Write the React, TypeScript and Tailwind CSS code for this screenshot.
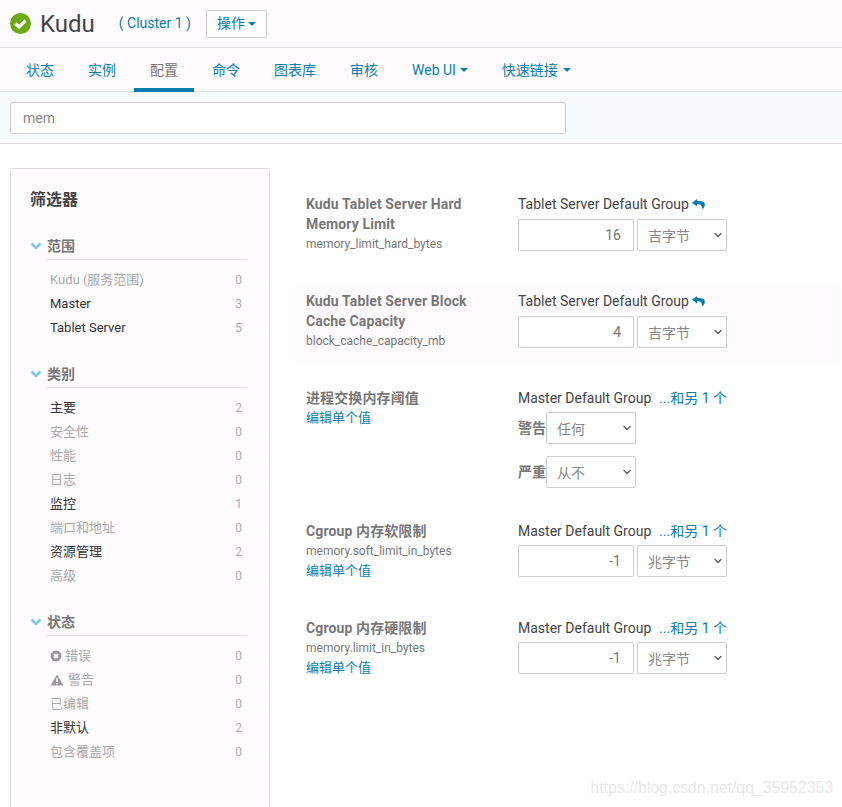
import { ChevronDown } from "lucide-react";

const navItems = ["状态", "实例", "配置", "命令", "图表库", "审核"];

type FilterItem = { label: string; count: number; active?: boolean; icon?: "error" | "warn" };

const groups: { title: string; items: FilterItem[] }[] = [
  {
    title: "范围",
    items: [
      { label: "Kudu (服务范围)", count: 0 },
      { label: "Master", count: 3, active: true },
      { label: "Tablet Server", count: 5, active: true },
    ],
  },
  {
    title: "类别",
    items: [
      { label: "主要", count: 2, active: true },
      { label: "安全性", count: 0 },
      { label: "性能", count: 0 },
      { label: "日志", count: 0 },
      { label: "监控", count: 1, active: true },
      { label: "端口和地址", count: 0 },
      { label: "资源管理", count: 2, active: true },
      { label: "高级", count: 0 },
    ],
  },
  {
    title: "状态",
    items: [
      { label: "错误", count: 0, icon: "error" },
      { label: "警告", count: 0, icon: "warn" },
      { label: "已编辑", count: 0 },
      { label: "非默认", count: 2, active: true },
      { label: "包含覆盖项", count: 0 },
    ],
  },
];

function Caret() {
  return <span className="inline-block w-0 h-0 border-x-[4px] border-x-transparent border-t-[4px] border-t-[#0a7cac]" />;
}

function Select({ value }: { value: string }) {
  return (
    <div className="w-[90px] h-[32px] bg-white border border-[#ccc] rounded-[2px] flex items-center justify-between pl-[10px] pr-[2px] text-[14px] font-normal text-[#888]">
      <span className="pt-[2px]">{value}</span>
      <ChevronDown size={12} strokeWidth={3} className="text-[#666]" />
    </div>
  );
}

function NumberField({ value, unit, tight }: { value: string; unit: string; tight?: boolean }) {
  return (
    <div className={tight ? "flex gap-[3px] mt-[4px]" : "flex gap-[3px] mt-[5px]"}>
      <div className="w-[116px] h-[32px] bg-white border border-[#ccc] rounded-[2px] flex items-center justify-end pr-[12px] text-[14px] text-[#777]">
        {value}
      </div>
      <Select value={unit} />
    </div>
  );
}

function UndoIcon() {
  return (
    <svg width="13" height="11" viewBox="0 0 13 11" className="ml-[3px]">
      <path d="M5 0 L0 3.8 L5 7.6 V5.4 C8 5.2 10 6 10.5 10.5 C12.5 8.5 13 6.5 12.8 5 C12.4 2.5 9 1.8 5 2 Z" fill="#0a7cac" />
    </svg>
  );
}

function GroupLabel({ name, undo, more }: { name: string; undo?: boolean; more?: boolean }) {
  return (
    <div className="flex items-center h-[20px] w-[209px] text-[14px] text-[#444]">
      <span className="whitespace-nowrap">{name}</span>
      {undo && <UndoIcon />}
      {more && <span className="ml-auto text-[#0a7cac] whitespace-nowrap">...和另 1 个</span>}
    </div>
  );
}

function EditLink() {
  return <div className="text-[13px] leading-[20px] text-[#0a7cac]">编辑单个值</div>;
}

function Title({ children }: { children: React.ReactNode }) {
  return <div className="w-[175px] text-[14px] leading-[20px] tracking-[0.12px] font-bold text-[#777]">{children}</div>;
}

function Mono({ children }: { children: React.ReactNode }) {
  return <div className="text-[12px] leading-[20px] text-[#777]">{children}</div>;
}

function ConfigRow({ left, right, className = "" }: { left: React.ReactNode; right: React.ReactNode; className?: string }) {
  return (
    <div className={`flex pl-[12px] ${className}`}>
      <div className="w-[212px] shrink-0">{left}</div>
      <div>{right}</div>
    </div>
  );
}

export default function App() {
  return (
    <div
      className="w-[842px] h-[807px] overflow-hidden relative bg-white"
      style={{ fontFamily: 'Roboto, "Noto Sans CJK SC", sans-serif' }}
    >
      {/* top header */}
      <div className="h-[48px] bg-[#fffcff] border-b border-[#e0dde0] flex items-center pl-[10px]">
        <svg width="21" height="21" viewBox="0 0 21 21">
          <circle cx="10.5" cy="10.5" r="10.5" fill="#6aa90f" />
          <path d="M5.5 10.5 L9 14 L15.5 7.5" stroke="#fff" strokeWidth="3.2" fill="none" />
        </svg>
        <span className="ml-[9px] text-[24px] text-[#444]">Kudu</span>
        <span className="ml-[24px] text-[14px] text-[#0a7cac] whitespace-nowrap">( Cluster 1 )</span>
        <div className="ml-[15px] h-[28px] w-[61px] bg-white border border-[#ccc] rounded-[2px] flex items-center justify-center gap-[3px] text-[14px] text-[#0a7cac]">
          操作
          <Caret />
        </div>
      </div>

      {/* tabs */}
      <div className="h-[44px] bg-[#fffcff] border-b border-[#e0dde0] flex gap-[2px] pl-[10px] text-[14px] text-[#0a7cac]">
        {navItems.map((item) => (
          <div
            key={item}
            className={
              item === "配置"
                ? "h-[44px] pt-[4px] px-[16px] flex items-center text-[#777] border-b-[4px] border-[#0a7cac]"
                : "h-[44px] px-[16px] flex items-center"
            }
          >
            {item}
          </div>
        ))}
        <div className="h-[44px] px-[16px] flex items-center gap-[4px]">
          Web UI
          <Caret />
        </div>
        <div className="h-[44px] pl-[16px] flex items-center gap-[5px]">
          快速链接
          <Caret />
        </div>
      </div>

      {/* search */}
      <div className="h-[52px] bg-[#f8fbff] border-b border-[#e0dde0] pt-[10px] pl-[10px]">
        <div className="w-[556px] h-[32px] bg-white border border-[#ccc] rounded-[2px] flex items-center pl-[12px] text-[14px] text-[#888]">
          mem
        </div>
      </div>

      <div className="flex pt-[24px] pl-[10px]">
        {/* filters */}
        <div className="w-[260px] h-[700px] shrink-0 bg-[#fffcff] border border-[#ddd] rounded-[2px] pt-[19px] pl-[19px] pr-[22px]">
          <div className="text-[16px] leading-[24px] font-bold text-[#444]">筛选器</div>
          <div className="mt-[24px] flex flex-col gap-[24px]">
            {groups.map((group) => (
              <div key={group.title}>
                <div className="flex items-center h-[20px]">
                  <svg width="12" height="8" viewBox="0 0 12 8" className="mr-[5px]">
                    <path d="M1.5 1.5 L6 6 L10.5 1.5" stroke="#7cc6ea" strokeWidth="2.6" fill="none" />
                  </svg>
                  <span className="text-[14px] font-bold text-[#777]">{group.title}</span>
                </div>
                <div className="ml-[17px] mt-[3px] border-t border-[#e0dde0] pt-[8px]">
                  {group.items.map((item) => (
                    <div key={item.label} className="h-[24px] pl-[3px] flex items-center justify-between text-[13px]">
                      <span className={`flex items-center ${item.active ? "text-[#333]" : "text-[#aaa]"}`}>
                        {item.icon === "error" && (
                          <svg width="12" height="12" viewBox="0 0 12 12" className="mr-[3px]">
                            <circle cx="6" cy="6" r="5.5" fill="#999" />
                            <path d="M4 4 L8 8 M8 4 L4 8" stroke="#fff" strokeWidth="1.8" />
                          </svg>
                        )}
                        {item.icon === "warn" && (
                          <svg width="14" height="12" viewBox="0 0 14 12" className="mr-[4px]">
                            <path d="M7 0.5 L13.5 11.5 L0.5 11.5 Z" fill="#999" />
                            <path d="M7 4 L7 8 M7 9 L7 10.5" stroke="#fff" strokeWidth="1.5" />
                          </svg>
                        )}
                        {item.label}
                      </span>
                      <span className="text-[#aaa] text-[12px] pr-[5px]">{item.count}</span>
                    </div>
                  ))}
                </div>
              </div>
            ))}
          </div>
        </div>

        {/* config rows */}
        <div className="flex-1 pl-[24px] pr-[2px] pt-[26px]">
          <ConfigRow
            className="h-[91px]"
            left={
              <>
                <Title>Kudu Tablet Server Hard Memory Limit</Title>
                <Mono>memory_limit_hard_bytes</Mono>
              </>
            }
            right={
              <>
                <GroupLabel name="Tablet Server Default Group" undo />
                <NumberField value="16" unit="吉字节" />
              </>
            }
          />
          <ConfigRow
            className="h-[79px] pt-[6px] bg-[#fffcff]"
            left={
              <>
                <Title>Kudu Tablet Server Block Cache Capacity</Title>
                <Mono>block_cache_capacity_mb</Mono>
              </>
            }
            right={
              <>
                <GroupLabel name="Tablet Server Default Group" undo />
                <NumberField value="4" unit="吉字节" />
              </>
            }
          />
          <ConfigRow
            className="h-[157px] pt-[24px]"
            left={
              <>
                <Title>进程交换内存阈值</Title>
                <EditLink />
              </>
            }
            right={
              <>
                <GroupLabel name="Master Default Group" more />
                <div className="flex items-center mt-[4px] text-[14px] font-bold text-[#777]">
                  警告
                  <Select value="任何" />
                </div>
                <div className="flex items-center mt-[12px] text-[14px] font-bold text-[#777]">
                  严重
                  <Select value="从不" />
                </div>
              </>
            }
          />
          <ConfigRow
            className="h-[97px]"
            left={
              <>
                <Title>Cgroup 内存软限制</Title>
                <Mono>memory.soft_limit_in_bytes</Mono>
                <EditLink />
              </>
            }
            right={
              <>
                <GroupLabel name="Master Default Group" more />
                <NumberField value="-1" unit="兆字节" tight />
              </>
            }
          />
          <ConfigRow
            className="h-[97px]"
            left={
              <>
                <Title>Cgroup 内存硬限制</Title>
                <Mono>memory.limit_in_bytes</Mono>
                <EditLink />
              </>
            }
            right={
              <>
                <GroupLabel name="Master Default Group" more />
                <NumberField value="-1" unit="兆字节" tight />
              </>
            }
          />
        </div>
      </div>

      <div
        className="absolute right-[9px] bottom-[7px] text-[15.8px] text-[#e8e8e8]"
        style={{ fontFamily: '"Liberation Sans", sans-serif' }}
      >
        https://blog.csdn.net/qq_35952353
      </div>
    </div>
  );
}
